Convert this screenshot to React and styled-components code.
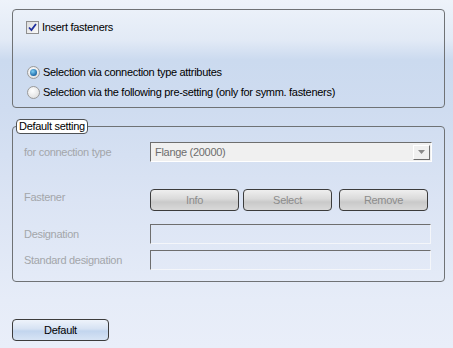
import React from "react";
import styled, { createGlobalStyle } from "styled-components";

const Global = createGlobalStyle`
  html, body { margin: 0; padding: 0; }
  body { font-family: "Liberation Sans", Arial, sans-serif; font-size: 11px; letter-spacing: -0.3px; }
`;

const Page = styled.div`
  width: 453px;
  height: 348px;
  box-sizing: border-box;
  padding: 9px 8px 0 12px;
  background: linear-gradient(180deg, #eef3fa 0px, #e2eaf6 40px, #cbdaef 60px, #cfdcf0 110px, #dbe4f4 200px, #e6ecf8 300px, #e9eef9 348px);
  color: #000;
  display: flex;
  flex-direction: column;
`;

const Panel = styled.div`
  width: 433px;
  height: 99px;
  box-sizing: border-box;
  border: 1px solid #6f7275;
  border-radius: 4px;
  padding: 11px 0 0 13px;
  display: flex;
  flex-direction: column;
`;

const OptionRow = styled.label`
  display: flex;
  align-items: center;
  gap: 3px;
  height: 13px;
  margin-top: ${(p) => p.$mt || 0}px;
  line-height: 13px;
  white-space: nowrap;
`;

const CheckBox = styled.span`
  width: 13px;
  height: 13px;
  box-sizing: border-box;
  border: 1px solid #8f8f8f;
  background: linear-gradient(135deg, #dcdcdc, #fafafa);
  display: flex;
  align-items: center;
  justify-content: center;
  flex: none;
`;

const Radio = styled.span`
  width: 13px;
  height: 13px;
  box-sizing: border-box;
  border-radius: 50%;
  border: 1px solid #9a9a9a;
  background: radial-gradient(circle at 40% 35%, #ffffff, #d8d8d8);
  display: flex;
  align-items: center;
  justify-content: center;
  flex: none;
  margin-left: 1px;
`;

const RadioDot = styled.span`
  width: 7px;
  height: 7px;
  border-radius: 50%;
  background: radial-gradient(circle at 40% 35%, #7fd0f5, #1e6aa8 70%, #17406e);
`;

const Group = styled.fieldset`
  margin: 11px 0 0 0;
  width: 433px;
  height: 163px;
  box-sizing: border-box;
  border: 1px solid #6f7275;
  border-radius: 4px;
  padding: 0 0 0 11px;
  min-width: 0;
`;

const Legend = styled.legend`
  margin-left: -8px;
  padding: 0 2px 0 2px;
  height: 13px;
  line-height: 13px;
  border: 1px solid #4f5255;
  border-radius: 4px;
  background: #ffffff;
  color: #000;
`;

const FormGrid = styled.div`
  display: grid;
  grid-template-columns: 126px 282px;
  margin-top: 8px;
`;

const Label = styled.div`
  color: #a3a6aa;
  display: flex;
  align-items: ${(p) => p.$align || "center"};
  padding-top: ${(p) => p.$pt || 0}px;
  margin-top: ${(p) => p.$mt || 0}px;
  white-space: nowrap;
`;

const Cell = styled.div`
  margin-top: ${(p) => p.$mt || 0}px;
  display: flex;
`;

const Combo = styled.div`
  width: 282px;
  height: 20px;
  box-sizing: border-box;
  border: 1px solid;
  border-color: #6e6e6e #ffffff #ffffff #6e6e6e;
  background: #f0f0f0;
  display: flex;
  align-items: center;
  padding-left: 4px;
  color: #6d6d6d;
`;

const ComboText = styled.span`
  flex: 1;
`;

const ComboArrow = styled.span`
  width: 17px;
  height: 15px;
  box-sizing: border-box;
  margin-right: 1px;
  border: 1px solid;
  border-color: #ffffff #6e6e6e #6e6e6e #ffffff;
  background: #f0f0f0;
  display: flex;
  align-items: center;
  justify-content: center;
`;

const Btn = styled.button`
  width: ${(p) => p.$w || 89}px;
  height: 22px;
  margin-left: ${(p) => p.$ml || 0}px;
  box-sizing: border-box;
  border: 1px solid #3c3c3c;
  border-radius: 4px;
  background: ${(p) =>
    p.$primary
      ? "linear-gradient(180deg, #eef3fb 0%, #d6e2f3 45%, #c2d5ee 55%, #d7e4f5 100%)"
      : "linear-gradient(180deg, #efefef 0%, #dadada 45%, #c9c9c9 60%, #d9d9d9 100%)"};
  color: ${(p) => (p.$primary ? "#000" : "#8c8c8c")};
  font-family: "Liberation Sans", Arial, sans-serif;
  font-size: 11px;
  letter-spacing: -0.3px;
  padding: 0;
  display: flex;
  align-items: center;
  justify-content: center;
`;

const TextInput = styled.div`
  width: 281px;
  height: 20px;
  box-sizing: border-box;
  border: 1px solid;
  border-color: #6e6e6e #f4f6fa #f4f6fa #6e6e6e;
`;

const Footer = styled.div`
  margin-top: 37px;
  display: flex;
`;

export default function App() {
  return (
    <>
      <Global />
      <Page>
        <Panel>
          <OptionRow>
            <CheckBox>
              <svg width="9" height="9" viewBox="0 0 9 9">
                <path d="M1 4.5 L3.4 7 L8 1" stroke="#1f2f9e" strokeWidth="1.8" fill="none" />
              </svg>
            </CheckBox>
            <span>Insert fasteners</span>
          </OptionRow>
          <OptionRow $mt={32}>
            <Radio>
              <RadioDot />
            </Radio>
            <span>Selection via connection type attributes</span>
          </OptionRow>
          <OptionRow $mt={7}>
            <Radio />
            <span>Selection via the following pre-setting (only for symm. fasteners)</span>
          </OptionRow>
        </Panel>
        <Group>
          <Legend>Default setting</Legend>
          <FormGrid>
            <Label>for connection type</Label>
            <Cell>
              <Combo>
                <ComboText>Flange (20000)</ComboText>
                <ComboArrow>
                  <svg width="7" height="4" viewBox="0 0 7 4">
                    <path d="M0 0 H7 L3.5 4 Z" fill="#8a8a8a" />
                  </svg>
                </ComboArrow>
              </Combo>
            </Cell>
            <Label $mt={27} $align="flex-start" $pt={2}>Fastener</Label>
            <Cell $mt={27}>
              <Btn>Info</Btn>
              <Btn $ml={4}>Select</Btn>
              <Btn $ml={7}>Remove</Btn>
            </Cell>
            <Label $mt={13}>Designation</Label>
            <Cell $mt={13}>
              <TextInput />
            </Cell>
            <Label $mt={6}>Standard designation</Label>
            <Cell $mt={6}>
              <TextInput />
            </Cell>
          </FormGrid>
        </Group>
        <Footer>
          <Btn $primary $w={97}>Default</Btn>
        </Footer>
      </Page>
    </>
  );
}
